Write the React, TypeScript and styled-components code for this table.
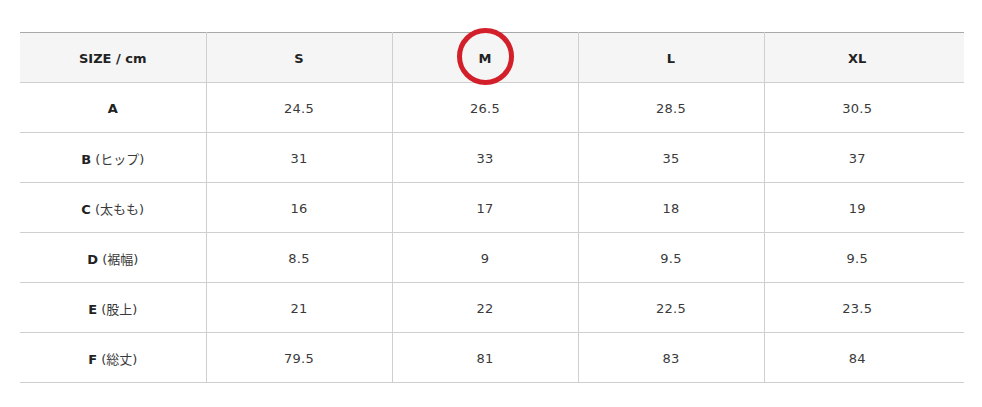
import styled, { createGlobalStyle } from 'styled-components'

const GlobalStyle = createGlobalStyle`
  body {
    margin: 0;
    background: #fff;
    font-family: 'DejaVu Sans', 'Noto Sans CJK JP', sans-serif;
    color: #333;
  }
`

const Wrapper = styled.div`
  padding: 32px 18px 0 20px;
`

const Table = styled.table`
  width: 944px;
  border-collapse: collapse;
  table-layout: fixed;
`

const HeadRow = styled.tr`
  background: #f5f5f5;
  border-top: 1px solid #a9a9a9;
  border-bottom: 1px solid #cfcfcf;
`

const BodyRow = styled.tr`
  border-bottom: 1px solid #cfcfcf;
`

const Cell = styled.td<{ $bold?: boolean }>`
  position: relative;
  height: 47px;
  padding: 2px 0 0;
  text-align: center;
  vertical-align: middle;
  font-size: 13px;
  font-weight: ${({ $bold }) => ($bold ? 700 : 400)};
  color: ${({ $bold }) => ($bold ? '#222' : '#3a3a3a')};
  letter-spacing: ${({ $bold }) => ($bold ? '0' : '0.3px')};

  & + & {
    border-left: 1px solid #cfcfcf;
  }

  &:last-child {
    padding-right: 14px;
  }
`

const Sub = styled.span`
  font-weight: 400;
  color: #3a3a3a;
`

const Marker = styled.span`
  position: absolute;
  left: 50%;
  top: 50%;
  width: 57px;
  height: 57px;
  margin: -30px 0 0 -28px;
  box-sizing: border-box;
  border: 5px solid #d21f2a;
  border-radius: 50%;
`

const sizes = ['S', 'M', 'L', 'XL']

const rows: { key: string; note?: string; values: string[] }[] = [
  { key: 'A', values: ['24.5', '26.5', '28.5', '30.5'] },
  { key: 'B', note: '(ヒップ)', values: ['31', '33', '35', '37'] },
  { key: 'C', note: '(太もも)', values: ['16', '17', '18', '19'] },
  { key: 'D', note: '(裾幅)', values: ['8.5', '9', '9.5', '9.5'] },
  { key: 'E', note: '(股上)', values: ['21', '22', '22.5', '23.5'] },
  { key: 'F', note: '(総丈)', values: ['79.5', '81', '83', '84'] },
]

export default function App(): JSX.Element {
  return (
    <Wrapper>
      <GlobalStyle />
      <Table>
        <colgroup>
          <col style={{ width: 186 }} />
          <col style={{ width: 186 }} />
          <col style={{ width: 186 }} />
          <col style={{ width: 186 }} />
          <col />
        </colgroup>
        <thead>
          <HeadRow>
            <Cell as="th" $bold>
              SIZE / cm
            </Cell>
            {sizes.map((size) => (
              <Cell as="th" key={size} $bold>
                {size}
                {size === 'M' && <Marker />}
              </Cell>
            ))}
          </HeadRow>
        </thead>
        <tbody>
          {rows.map((row) => (
            <BodyRow key={row.key}>
              <Cell $bold>
                {row.key}
                {row.note && <Sub> {row.note}</Sub>}
              </Cell>
              {row.values.map((value, index) => (
                <Cell key={index}>{value}</Cell>
              ))}
            </BodyRow>
          ))}
        </tbody>
      </Table>
    </Wrapper>
  )
}
